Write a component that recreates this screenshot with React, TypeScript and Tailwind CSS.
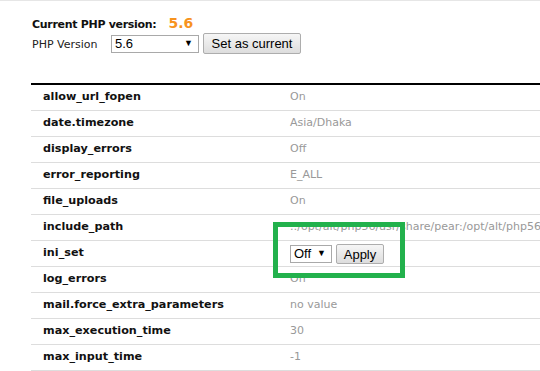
import React from 'react';

const rows: { name: string; value: string }[] = [
  { name: 'allow_url_fopen', value: 'On' },
  { name: 'date.timezone', value: 'Asia/Dhaka' },
  { name: 'display_errors', value: 'Off' },
  { name: 'error_reporting', value: 'E_ALL' },
  { name: 'file_uploads', value: 'On' },
  { name: 'include_path', value: '.:/opt/alt/php56/usr/share/pear:/opt/alt/php56/usr/share/php' },
  { name: 'ini_set', value: '' },
  { name: 'log_errors', value: 'On' },
  { name: 'mail.force_extra_parameters', value: 'no value' },
  { name: 'max_execution_time', value: '30' },
  { name: 'max_input_time', value: '-1' },
];

const FakeSelect: React.FC<{ label: string; width: string }> = ({ label, width }) => (
  <div
    className={`${width} h-[18px] bg-white border border-[#a9a9a9] flex items-center justify-between pl-[3px] pr-[5px] text-[13px] text-black font-['Liberation_Sans',sans-serif]`}
  >
    <span>{label}</span>
    <span className="text-[9px] leading-none">▼</span>
  </div>
);

const App: React.FC = () => {
  return (
    <div className="relative w-[540px] h-[371px] overflow-hidden bg-white border-t border-[#e6e6e6] font-['DejaVu_Sans',sans-serif]">
      <div className="pl-[32px] pt-[12px]">
        <div className="flex items-baseline">
          <span className="text-[11px] font-bold tracking-[-0.3px] text-[#111]">Current PHP version:</span>
          <span className="ml-[12px] text-[14px] font-bold text-[#f7931e]">5.6</span>
        </div>
        <div className="flex items-center -mt-[1px]">
          <span className="text-[11px] text-[#222] w-[79px] pt-[4px]">PHP Version</span>
          <FakeSelect label="5.6" width="w-[88px]" />
          <button className="ml-[4px] w-[98px] h-[21px] rounded-[2px] border border-[#adadad] bg-gradient-to-b from-[#f6f6f6] to-[#dddddd] text-[13px] text-black font-['Liberation_Sans',sans-serif]">
            Set as current
          </button>
        </div>
      </div>

      <div className="ml-[31px] mt-[29px] w-[600px] border-t-2 border-black">
        {rows.map((r) => (
          <div key={r.name} className="h-[26px] border-b border-[#dddddd] flex items-center">
            <div className="w-[259px] shrink-0 pl-[12px] text-[11.2px] font-bold text-[#111]">{r.name}</div>
            {r.name === 'ini_set' ? (
              <div className="flex items-center gap-[4px]">
                <FakeSelect label="Off" width="w-[42px]" />
                <button className="w-[48px] h-[20px] rounded-[2px] border border-[#adadad] bg-gradient-to-b from-[#f6f6f6] to-[#dddddd] text-[13px] text-black font-['Liberation_Sans',sans-serif]">
                  Apply
                </button>
              </div>
            ) : (
              <div className="text-[11px] text-[#999] whitespace-nowrap">{r.value}</div>
            )}
          </div>
        ))}
      </div>

      <div className="absolute left-[273px] top-[221px] w-[132px] h-[56px] border-[5px] border-[#22b14c]" />
    </div>
  );
};

export default App;
